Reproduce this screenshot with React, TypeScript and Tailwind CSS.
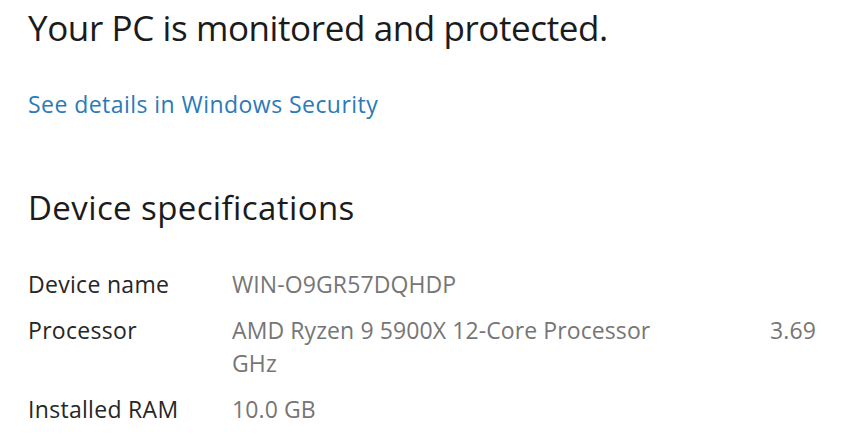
const specs = [
  { label: "Device name", value: "WIN-O9GR57DQHDP" },
  { label: "Installed RAM", value: "10.0 GB" },
];

function SpecRow({ label, children }: { label: string; children: React.ReactNode }) {
  return (
    <div className="flex items-start">
      <div className="w-[204px] shrink-0 text-[#262626] tracking-[0.3px]">{label}</div>
      <div className="flex-1 text-[#767676] tracking-[0.1px]">{children}</div>
    </div>
  );
}

export default function App() {
  return (
    <div
      className="w-[850px] h-[441px] bg-white pl-[28px] overflow-hidden"
      style={{ fontFamily: "'Open Sans', 'Noto Sans', sans-serif" }}
    >
      <h1 className="pt-[4px] text-[35px] leading-[48px] tracking-[-0.4px] text-[#1b1b1b] font-normal">
        Your PC is monitored and protected.
      </h1>

      <a href="#" className="block mt-[37px] text-[23px] leading-[30px] tracking-[0.45px] text-[#2a7ab8]">
        See details in Windows Security
      </a>

      <h2 className="mt-[67px] text-[33px] leading-[44px] tracking-[0.4px] text-[#1b1b1b] font-normal">
        Device specifications
      </h2>

      <div className="mt-[38px] w-[788px] flex flex-col gap-[13px] text-[23px] leading-[33px]">
        <SpecRow label={specs[0].label}>{specs[0].value}</SpecRow>
        <SpecRow label="Processor">
          <div className="flex">
            <span>AMD Ryzen 9 5900X 12-Core Processor</span>
            <span className="ml-auto">3.69</span>
          </div>
          <div>GHz</div>
        </SpecRow>
        <SpecRow label={specs[1].label}>{specs[1].value}</SpecRow>
      </div>
    </div>
  );
}
